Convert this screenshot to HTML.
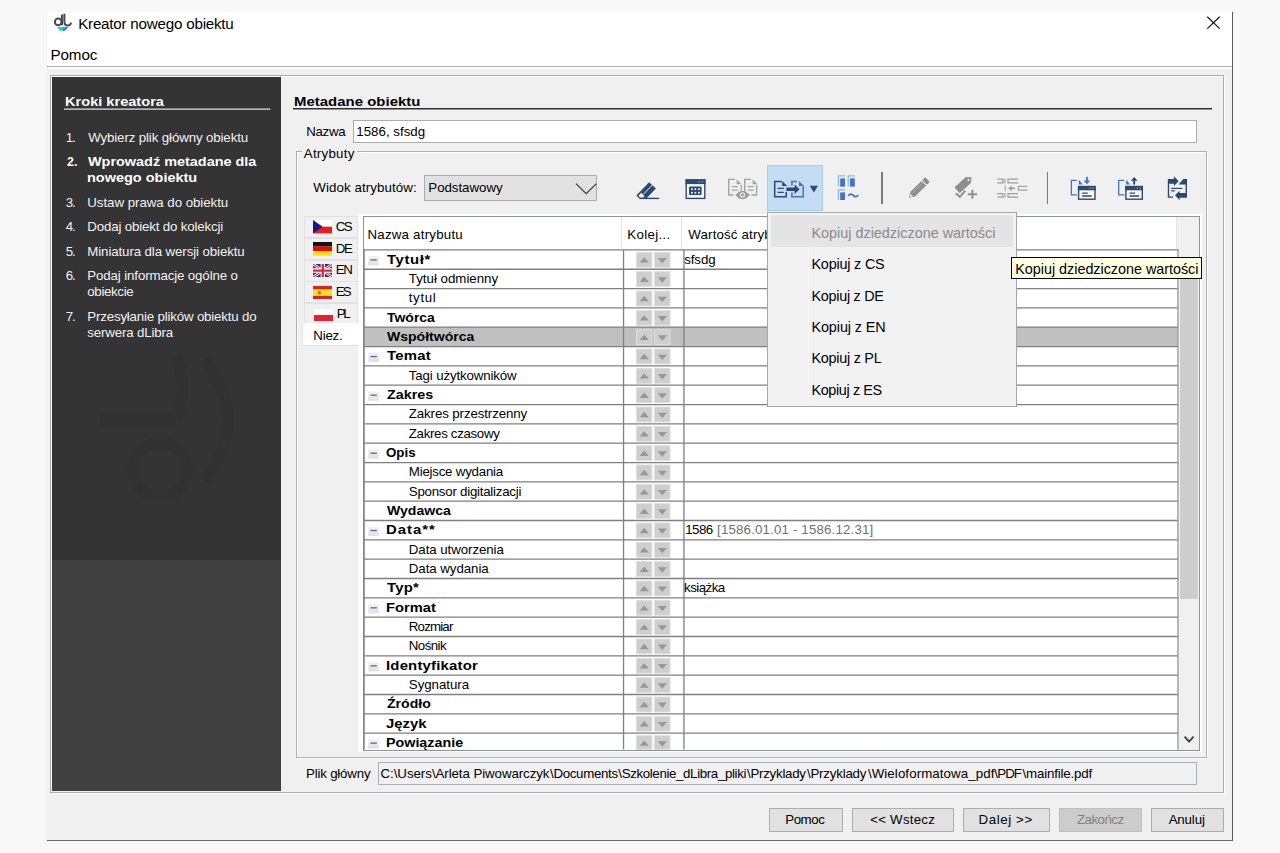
<!DOCTYPE html><html lang="pl"><head><meta charset="utf-8"><title>Kreator nowego obiektu</title><style>
html,body{margin:0;padding:0}
body{width:1280px;height:853px;background:#f8f8f8;overflow:hidden;position:relative;font-family:'Liberation Sans',sans-serif;font-size:13.3px}
div,span,svg{position:absolute;box-sizing:border-box}
.t{white-space:pre;line-height:20px;height:20px}
.btn{background:#e1e1e1;border:1px solid #adadad}
.hl{background:#848484}
.vl{background:#848484}
.ud{background:#cfcfcf;border:1px solid #dcdcdc;width:15.6px;height:15px}
.ex{background:linear-gradient(#f1f1f1,#e2e2e2);width:10.6px;height:9.4px}
.ex i{position:absolute;left:2.3px;top:3.2px;width:6.2px;height:1.3px;background:#5465b2}
.tab{left:305.3px;width:52.6px;height:21.8px;border:1px solid #e2e2e2;background:#f0f0f0}
</style></head><body>
<div style="left:47.00px;top:12.00px;width:1186.00px;height:829.00px;background:#f0f0f0"></div>
<div style="left:47.00px;top:12.00px;width:1185.00px;height:54.00px;background:#fff"></div>
<div style="left:47.00px;top:66.00px;width:1185.00px;height:1.00px;background:#b0b0b0"></div>
<div style="left:47.00px;top:67.00px;width:1185.00px;height:2.00px;background:#fcfcfc"></div>
<div style="left:1232.00px;top:12.00px;width:1.00px;height:829.00px;background:#5a5a5a"></div>
<div style="left:47.00px;top:840.00px;width:1186.00px;height:1.00px;background:#6a6a6a"></div>
<svg style="left:52px;top:12px" width="22" height="22" viewBox="52 12 22 22"><circle cx="58.2" cy="21.9" r="3.3" fill="none" stroke="#474c54" stroke-width="2"/><path d="M62 14.6V25.2" stroke="#474c54" stroke-width="2" fill="none"/><path d="M64.4 14.6V21.6Q64.4 25.6 67.6 25.6Q70 25.6 70.9 23.4" stroke="#474c54" stroke-width="2" fill="none" stroke-linecap="round"/><path d="M57.3 27.1H62.8V31Q59.4 31.4 57.3 27.1z" fill="#1fd6a6"/><path d="M62.8 27.1H68Q66.2 31.4 62.8 31z" fill="#2f8df0"/></svg>
<svg style="left:1205px;top:15px" width="17" height="16" viewBox="0 0 17 16"><path d="M2.3 1.7L14.7 13.6M14.7 1.7L2.3 13.6" stroke="#1a1a1a" stroke-width="1.25" fill="none"/></svg>
<div style="left:49.60px;top:75.00px;width:1174.40px;height:717.60px;border:1px solid #adadad;box-shadow:inset 1px 1px 0 #fff, 1px 1px 0 #fff"></div>
<div style="left:52.00px;top:77.00px;width:229.00px;height:483.00px;background:#343434"></div>
<div style="left:52.00px;top:560.00px;width:229.00px;height:231.20px;background:#414141"></div>
<svg style="left:90px;top:350px" width="160" height="170" viewBox="90 350 160 170"><g fill="none" stroke="#323232" stroke-width="11"><path d="M100 420H175"/><circle cx="160" cy="470" r="27"/><path d="M175 355Q190 390 175 420"/><path d="M205 360Q250 420 205 480"/></g></svg>
<svg style="left:60px;top:104px" width="215" height="10" viewBox="60 104 215 10"><path d="M64 109H270.3" stroke="#e2e2e2" stroke-width="1.25"/></svg>
<svg style="left:290px;top:104px" width="925" height="10" viewBox="290 104 925 10"><path d="M293 108.7H1212" stroke="#2e2e2e" stroke-width="1.6"/></svg>
<div style="left:353.00px;top:119.80px;width:843.60px;height:23.00px;background:#fff;border:1px solid #abadb3"></div>
<div style="left:296.00px;top:151.00px;width:911.40px;height:606.60px;border:1px solid #b0b0b0;box-shadow:inset 1px 1px 0 #fff, 1px 1px 0 #fff"></div>
<div style="left:301.50px;top:149.00px;width:55.50px;height:6.00px;background:#f0f0f0"></div>
<div style="left:423.80px;top:175.00px;width:173.00px;height:26.00px;background:#e1e1e1;border:1px solid #adadad"></div>
<svg style="left:574px;top:181px" width="24" height="16" viewBox="0 0 24 16"><path d="M2 2.6L12.2 12.6L22.4 2.6" stroke="#3c3c3c" stroke-width="1.3" fill="none"/></svg>
<div style="left:766.90px;top:165.30px;width:56.50px;height:45.60px;background:#c4ddf3;border:1px solid #a5cdf3"></div>
<svg style="left:634px;top:178px" width="28" height="24" viewBox="634 178 28 24"><path d="M636.3 195.6L649.1 182.2L655.9 188.4L646.6 198.2H639z" fill="#2c4a6e"/><path d="M639.4 198.4H659.2" stroke="#2c4a6e" stroke-width="1.4"/><path d="M643.4 194.2L652.2 185.2" stroke="#f0f0f0" stroke-width="1"/><path d="M638.4 195.7L641.4 192.8L644.6 196.2L643.2 197.4H640z" fill="#f0f0f0"/></svg>
<svg style="left:684px;top:177px" width="24" height="25" viewBox="684 177 24 25"><rect x="686.2" y="180" width="18.6" height="18.4" fill="#fafafa" stroke="#2c4a6e" stroke-width="1.4"/><rect x="685.5" y="179.3" width="20" height="4.8" fill="#2c4a6e"/><rect x="698.4" y="181" width="1.5" height="1.5" fill="#7d93ad"/><rect x="701.6" y="181" width="1.5" height="1.5" fill="#7d93ad"/><rect x="689" y="186.6" width="12.6" height="8.5" rx="1" fill="#2c4a6e"/><rect x="691.1" y="188.3" width="1.7" height="1.7" fill="#f6f6f6"/><rect x="691.1" y="191.9" width="1.7" height="1.7" fill="#f6f6f6"/><rect x="694.5" y="188.3" width="1.7" height="1.7" fill="#f6f6f6"/><rect x="694.5" y="191.9" width="1.7" height="1.7" fill="#f6f6f6"/><rect x="698" y="188.3" width="1.7" height="1.7" fill="#f6f6f6"/><rect x="698" y="191.9" width="1.7" height="1.7" fill="#f6f6f6"/></svg>
<svg style="left:726px;top:176px" width="34" height="26" viewBox="726 176 34 26"><path d="M735 179.4H728.7V195H733.6" fill="none" stroke="#a3a3a3" stroke-width="1.4"/><path d="M736.6 179.2V184.2H741.4z" fill="#a3a3a3"/><path d="M731.6 186.6H737.8M731.6 190.2H737.8" stroke="#a3a3a3" stroke-width="1.3"/><path d="M751 179.4H744.7V195H749.6" fill="none" stroke="#a3a3a3" stroke-width="1.4"/><path d="M752.6 179.2V184.2H757.4z" fill="#a3a3a3"/><path d="M747.6 186.6H753.8M747.6 190.2H753.8" stroke="#a3a3a3" stroke-width="1.3"/><path d="M741.2 185V190.5" stroke="#a3a3a3" stroke-width="1.3"/><path d="M756.6 185V195H751.4" fill="none" stroke="#a3a3a3" stroke-width="1.4"/><path d="M735.6 195Q742.4 186.4 749.4 195Q742.4 203.6 735.6 195z" fill="#9a9a9a"/><circle cx="742.5" cy="195" r="2.7" fill="#e8e8e8"/><circle cx="742.5" cy="195" r="1.4" fill="#9a9a9a"/></svg>
<svg style="left:772px;top:178px" width="48" height="22" viewBox="772 178 48 22"><path d="M781.8 181.6H774.7V196.8H786.2V192" fill="none" stroke="#2c4a6e" stroke-width="1.5"/><path d="M782.2 180.9V186H787.2z" fill="#2c4a6e"/><path d="M777.5 188.4H783.8M777.5 192.3H783.8" stroke="#2c4a6e" stroke-width="1.3"/><path d="M797 181.6H791.9V185.4M791.9 192.6V196.8H803.2V186.2" fill="none" stroke="#3f74c6" stroke-width="1.5"/><path d="M799 180.9V186H804z" fill="#3f74c6"/><path d="M786.4 187.6H794.6V184.6L799.6 189.3L794.6 194V191H786.4z" fill="#2c4a6e"/><path d="M809.7 185.7H818L813.85 192.4z" fill="#2c4a6e"/></svg>
<svg style="left:836px;top:173px" width="25" height="29" viewBox="836 173 25 29"><path d="M838.4 186.6V175.79999999999998H845.0" fill="none" stroke="#8db4ea" stroke-width="1.2"/><rect x="840.1999999999999" y="178.39999999999998" width="4.8" height="8.2" fill="#3f74c6"/><path d="M848.2 186.6V175.79999999999998H854.8000000000001" fill="none" stroke="#8db4ea" stroke-width="1.2"/><rect x="850.0" y="178.39999999999998" width="4.8" height="8.2" fill="#3f74c6"/><path d="M838.4 200.0V189.79999999999998H845.0" fill="none" stroke="#8db4ea" stroke-width="1.2"/><rect x="840.1999999999999" y="192.39999999999998" width="4.8" height="7.6000000000000005" fill="#3f74c6"/><path d="M848.2 195.8Q850.6 192.6 853.2 195.4Q855.8 198.2 858.2 195" fill="none" stroke="#3f74c6" stroke-width="1.7"/></svg>
<svg style="left:905px;top:175px" width="27" height="27" viewBox="905 175 27 27"><g transform="rotate(-44.5 918.5 188.5)"><path d="M905.2 188.5L910.4 185.2H926V191.8H910.4z" fill="#8e8e8e"/><rect x="927" y="185.2" width="4.2" height="6.6" rx=".8" fill="#8e8e8e"/><path d="M911 187.4H925.4" stroke="#b5b5b5" stroke-width=".8"/><path d="M906.2 188.5L909.2 186.6V190.4z" fill="#e8e8e8"/></g></svg>
<svg style="left:953px;top:175px" width="27" height="27" viewBox="953 175 27 27"><g transform="rotate(-42 964 184)"><path d="M955.2 180.6H969.4L973.4 184L969.4 187.4H955.2z" fill="#8e8e8e" stroke="#8e8e8e" stroke-width="1" stroke-linejoin="round"/><circle cx="970" cy="184" r="1.1" fill="#f0f0f0"/></g><path d="M955.8 193.2L959.8 196.8L965.4 190.6" fill="none" stroke="#8e8e8e" stroke-width="1.9"/><path d="M972.4 189.8V198.8M967.8 194.3H977" stroke="#8e8e8e" stroke-width="2"/></svg>
<svg style="left:995px;top:176px" width="35" height="24" viewBox="995 176 35 24"><path d="M997.4 179.2H1002.8V182.79999999999998H997.4" fill="none" stroke="#9c9c9c" stroke-width="1.2"/><path d="M1004.8 178.6V183.39999999999998" stroke="#9c9c9c" stroke-width="1.1"/><path d="M1018 179.2H1008V182.79999999999998H1018" fill="none" stroke="#9c9c9c" stroke-width="1.2"/><path d="M997.4 193.6H1002.8V197.2H997.4" fill="none" stroke="#9c9c9c" stroke-width="1.2"/><path d="M1004.8 193.0V197.79999999999998" stroke="#9c9c9c" stroke-width="1.1"/><path d="M1018 193.6H1008V197.2H1018" fill="none" stroke="#9c9c9c" stroke-width="1.2"/><path d="M1005.3 185.4V191.2" stroke="#a3a3a3" stroke-width="1.1"/><path d="M1008.2 188.3L1011.6 185.4V187.4H1015V189.2H1011.6V191.2z" fill="#9a9a9a"/><path d="M1027.4 186.4H1018.4V190.2H1027.4" fill="none" stroke="#a3a3a3" stroke-width="1.2"/></svg>
<svg style="left:1068px;top:174px" width="30" height="28" viewBox="1068 174 30 28"><rect x="1078.6000000000001" y="186.6" width="16.4" height="12.6" fill="#fafafa" stroke="#2c4a6e" stroke-width="1.4"/><rect x="1077.9" y="185.9" width="17.8" height="4.4" fill="#2c4a6e"/><rect x="1089.4" y="187.4" width="1.4" height="1.4" fill="#7d93ad"/><rect x="1092.2" y="187.4" width="1.4" height="1.4" fill="#7d93ad"/><path d="M1082.2 193.2H1087.8000000000002M1082.2 196H1091.8000000000002" stroke="#2c4a6e" stroke-width="1.3"/><path d="M1076.8000000000002 180.4H1071.4V194.8H1077.0" fill="none" stroke="#3f74c6" stroke-width="1.3"/><path d="M1078.8000000000002 179.8V184.4H1082.8000000000002z" fill="#3f74c6"/><path d="M1086.9 176.8V181" stroke="#3f74c6" stroke-width="1.9"/><path d="M1083.5 180.4H1090.3L1086.9 184.2z" fill="#3f74c6"/></svg>
<svg style="left:1115px;top:174px" width="31" height="28" viewBox="1115 174 31 28"><rect x="1125.9" y="186.6" width="16.4" height="12.6" fill="#fafafa" stroke="#2c4a6e" stroke-width="1.4"/><rect x="1125.2" y="185.9" width="17.8" height="4.4" fill="#2c4a6e"/><rect x="1136.7" y="187.4" width="1.4" height="1.4" fill="#7d93ad"/><rect x="1139.5" y="187.4" width="1.4" height="1.4" fill="#7d93ad"/><path d="M1129.5 193.2H1135.1000000000001M1129.5 196H1139.1000000000001" stroke="#2c4a6e" stroke-width="1.3"/><path d="M1124.1000000000001 180.4H1118.7V194.8H1124.3" fill="none" stroke="#3f74c6" stroke-width="1.3"/><path d="M1126.1000000000001 179.8V184.4H1130.1000000000001z" fill="#3f74c6"/><path d="M1134.2 180V184.6" stroke="#2c4a6e" stroke-width="1.9"/><path d="M1130.8 180.8H1137.6L1134.2 177z" fill="#2c4a6e"/></svg>
<svg style="left:1165px;top:174px" width="25" height="28" viewBox="1165 174 25 28"><path d="M1167.8 178.9H1173.9V176.3L1178.7 181.2L1173.9 185.9V183.8H1169.2V196.4H1173.1V197.7H1167.8z" fill="#2c4a6e"/><path d="M1183.4 178.9H1187V197.7H1179.6V200.3L1175 195.3L1179.6 190.8V193H1185.6V184.4H1178.6z" fill="#2c4a6e"/><path d="M1171.2 188.4H1182.4" stroke="#2c4a6e" stroke-width="1.2"/><path d="M1171.2 190.8H1174.8" stroke="#2c4a6e" stroke-width="1.3"/></svg>
<div style="left:881.30px;top:172.40px;width:1.40px;height:31.20px;background:#7b7b7b"></div>
<div style="left:1046.80px;top:172.40px;width:1.40px;height:31.20px;background:#7b7b7b"></div>
<div style="left:304.40px;top:216.40px;width:53.50px;height:22.00px;border:1px solid #e1e1e1;background:#f0f0f0"></div>
<svg style="left:312.6px;top:220.4px" width="19.6" height="13.4" viewBox="0 0 19.6 13.4" preserveAspectRatio="none"><rect width="19.6" height="6.7" fill="#fff"/><rect y="6.7" width="19.6" height="6.7" fill="#ee1a1a"/><path d="M0 0L9.6 6.7L0 13.4z" fill="#16168e"/></svg>
<div style="left:304.40px;top:238.00px;width:53.50px;height:22.00px;border:1px solid #e1e1e1;background:#f0f0f0"></div>
<svg style="left:312.6px;top:242.3px" width="19.6" height="13.6" viewBox="0 0 19.6 13.6" preserveAspectRatio="none"><rect width="19.6" height="4.6" fill="#141414"/><rect y="4.6" width="19.6" height="4.5" fill="#f60404"/><rect y="9.1" width="19.6" height="4.5" fill="#ffe00a"/></svg>
<div style="left:304.40px;top:259.60px;width:53.50px;height:22.00px;border:1px solid #e1e1e1;background:#f0f0f0"></div>
<svg style="left:312.6px;top:263.90000000000003px" width="19.6" height="13.2" viewBox="0 0 20 13" preserveAspectRatio="none"><rect width="20" height="13" fill="#26337f"/><path d="M0 0L20 13M20 0L0 13" stroke="#fff" stroke-width="2.6"/><path d="M0 0L20 13M20 0L0 13" stroke="#d8283a" stroke-width="1"/><path d="M10 0V13M0 6.5H20" stroke="#fff" stroke-width="4.4"/><path d="M10 0V13M0 6.5H20" stroke="#d8283a" stroke-width="2.4"/></svg>
<div style="left:304.40px;top:281.20px;width:53.50px;height:22.00px;border:1px solid #e1e1e1;background:#f0f0f0"></div>
<svg style="left:312.6px;top:285.50000000000006px" width="19.6" height="13.2" viewBox="0 0 20 13" preserveAspectRatio="none"><rect width="20" height="13" fill="#d8222a"/><rect y="3.2" width="20" height="6.6" fill="#ffdf1e"/><circle cx="6.6" cy="6.6" r="1.7" fill="#b5753a"/></svg>
<div style="left:304.40px;top:302.80px;width:53.50px;height:22.00px;border:1px solid #e1e1e1;background:#f0f0f0"></div>
<svg style="left:313.6px;top:308.8px" width="19.6" height="12" viewBox="0 0 20 12" preserveAspectRatio="none"><rect width="20" height="6" fill="#fff"/><rect y="6" width="20" height="6" fill="#e8212b"/></svg>
<div style="left:358.00px;top:213.60px;width:843.80px;height:538.20px;background:#fdfdfd"></div>
<div style="left:302.50px;top:322.80px;width:56.70px;height:22.40px;background:#fff;box-shadow:-1px 0 0 #e6e6e6,0 1px 0 #e0e0e0"></div>
<div style="left:362.80px;top:216.00px;width:837.40px;height:534.50px;background:#fff;border:1px solid #8a93a0"></div>
<div style="left:1177.30px;top:217.00px;width:21.90px;height:532.50px;background:#f0f0f0"></div>
<div style="left:620.80px;top:217.00px;width:1.40px;height:32.00px;background:#e4e4e4"></div>
<div style="left:680.80px;top:217.00px;width:1.40px;height:32.00px;background:#e4e4e4"></div>
<div style="left:1176.00px;top:217.00px;width:1.30px;height:32.00px;background:#e4e4e4"></div>
<div style="left:364.00px;top:327.22px;width:813.80px;height:19.33px;background:#c0c0c0"></div>
<svg style="left:0;top:0" width="1280" height="853" viewBox="0 0 1280 853"><path d="M363.8 249.90H1178.4M363.8 269.23H1178.4M363.8 288.56H1178.4M363.8 307.89H1178.4M363.8 327.22H1178.4M363.8 346.55H1178.4M363.8 365.88H1178.4M363.8 385.21H1178.4M363.8 404.54H1178.4M363.8 423.87H1178.4M363.8 443.20H1178.4M363.8 462.53H1178.4M363.8 481.86H1178.4M363.8 501.19H1178.4M363.8 520.52H1178.4M363.8 539.85H1178.4M363.8 559.18H1178.4M363.8 578.51H1178.4M363.8 597.84H1178.4M363.8 617.17H1178.4M363.8 636.50H1178.4M363.8 655.83H1178.4M363.8 675.16H1178.4M363.8 694.49H1178.4M363.8 713.82H1178.4M363.8 733.15H1178.4M364.1 249.3V749.5M623.55 249.3V749.5M683.95 249.3V749.5" stroke="#808080" stroke-width="1.3" fill="none"/><path d="M1177.95 249.3V749.5" stroke="#9a9a9a" stroke-width="1.3" fill="none"/></svg>
<svg style="left:0;top:0" width="1280" height="853" viewBox="0 0 1280 853"><defs><linearGradient id="eg" x1="0" y1="0" x2="0" y2="1"><stop offset="0" stop-color="#f2f2f2"/><stop offset="1" stop-color="#e0e0e0"/></linearGradient></defs><rect x="636.5" y="252.40" width="15.4" height="14.90" fill="#cecece" stroke="#dedede" stroke-width="1"/><path d="M639.7 262.60L644.2 257.20L648.7 262.60z" fill="#979797"/><rect x="654.6" y="252.40" width="15.4" height="14.90" fill="#cecece" stroke="#dedede" stroke-width="1"/><path d="M657.8000000000001 258.00L662.3000000000001 263.40L666.8000000000001 258.00z" fill="#979797"/><rect x="368.2" y="256.20" width="10.6" height="9.20" fill="url(#eg)"/><path d="M370.5 259.90H376.8" stroke="#5465b2" stroke-width="1.3"/><rect x="636.5" y="271.73" width="15.4" height="14.90" fill="#cecece" stroke="#dedede" stroke-width="1"/><path d="M639.7 281.93L644.2 276.53L648.7 281.93z" fill="#979797"/><rect x="654.6" y="271.73" width="15.4" height="14.90" fill="#cecece" stroke="#dedede" stroke-width="1"/><path d="M657.8000000000001 277.33L662.3000000000001 282.73L666.8000000000001 277.33z" fill="#979797"/><rect x="636.5" y="291.06" width="15.4" height="14.90" fill="#cecece" stroke="#dedede" stroke-width="1"/><path d="M639.7 301.26L644.2 295.86L648.7 301.26z" fill="#979797"/><rect x="654.6" y="291.06" width="15.4" height="14.90" fill="#cecece" stroke="#dedede" stroke-width="1"/><path d="M657.8000000000001 296.66L662.3000000000001 302.06L666.8000000000001 296.66z" fill="#979797"/><rect x="636.5" y="310.39" width="15.4" height="14.90" fill="#cecece" stroke="#dedede" stroke-width="1"/><path d="M639.7 320.59L644.2 315.19L648.7 320.59z" fill="#979797"/><rect x="654.6" y="310.39" width="15.4" height="14.90" fill="#cecece" stroke="#dedede" stroke-width="1"/><path d="M657.8000000000001 315.99L662.3000000000001 321.39L666.8000000000001 315.99z" fill="#979797"/><rect x="636.5" y="329.72" width="15.4" height="14.90" fill="#cecece" stroke="#dedede" stroke-width="1"/><path d="M639.7 339.92L644.2 334.52L648.7 339.92z" fill="#979797"/><rect x="654.6" y="329.72" width="15.4" height="14.90" fill="#cecece" stroke="#dedede" stroke-width="1"/><path d="M657.8000000000001 335.32L662.3000000000001 340.72L666.8000000000001 335.32z" fill="#979797"/><rect x="636.5" y="349.05" width="15.4" height="14.90" fill="#cecece" stroke="#dedede" stroke-width="1"/><path d="M639.7 359.25L644.2 353.85L648.7 359.25z" fill="#979797"/><rect x="654.6" y="349.05" width="15.4" height="14.90" fill="#cecece" stroke="#dedede" stroke-width="1"/><path d="M657.8000000000001 354.65L662.3000000000001 360.05L666.8000000000001 354.65z" fill="#979797"/><rect x="368.2" y="352.85" width="10.6" height="9.20" fill="url(#eg)"/><path d="M370.5 356.55H376.8" stroke="#5465b2" stroke-width="1.3"/><rect x="636.5" y="368.38" width="15.4" height="14.90" fill="#cecece" stroke="#dedede" stroke-width="1"/><path d="M639.7 378.58L644.2 373.18L648.7 378.58z" fill="#979797"/><rect x="654.6" y="368.38" width="15.4" height="14.90" fill="#cecece" stroke="#dedede" stroke-width="1"/><path d="M657.8000000000001 373.98L662.3000000000001 379.38L666.8000000000001 373.98z" fill="#979797"/><rect x="636.5" y="387.71" width="15.4" height="14.90" fill="#cecece" stroke="#dedede" stroke-width="1"/><path d="M639.7 397.91L644.2 392.51L648.7 397.91z" fill="#979797"/><rect x="654.6" y="387.71" width="15.4" height="14.90" fill="#cecece" stroke="#dedede" stroke-width="1"/><path d="M657.8000000000001 393.31L662.3000000000001 398.71L666.8000000000001 393.31z" fill="#979797"/><rect x="368.2" y="391.51" width="10.6" height="9.20" fill="url(#eg)"/><path d="M370.5 395.21H376.8" stroke="#5465b2" stroke-width="1.3"/><rect x="636.5" y="407.04" width="15.4" height="14.90" fill="#cecece" stroke="#dedede" stroke-width="1"/><path d="M639.7 417.24L644.2 411.84L648.7 417.24z" fill="#979797"/><rect x="654.6" y="407.04" width="15.4" height="14.90" fill="#cecece" stroke="#dedede" stroke-width="1"/><path d="M657.8000000000001 412.64L662.3000000000001 418.04L666.8000000000001 412.64z" fill="#979797"/><rect x="636.5" y="426.37" width="15.4" height="14.90" fill="#cecece" stroke="#dedede" stroke-width="1"/><path d="M639.7 436.57L644.2 431.17L648.7 436.57z" fill="#979797"/><rect x="654.6" y="426.37" width="15.4" height="14.90" fill="#cecece" stroke="#dedede" stroke-width="1"/><path d="M657.8000000000001 431.97L662.3000000000001 437.37L666.8000000000001 431.97z" fill="#979797"/><rect x="636.5" y="445.70" width="15.4" height="14.90" fill="#cecece" stroke="#dedede" stroke-width="1"/><path d="M639.7 455.90L644.2 450.50L648.7 455.90z" fill="#979797"/><rect x="654.6" y="445.70" width="15.4" height="14.90" fill="#cecece" stroke="#dedede" stroke-width="1"/><path d="M657.8000000000001 451.30L662.3000000000001 456.70L666.8000000000001 451.30z" fill="#979797"/><rect x="368.2" y="449.50" width="10.6" height="9.20" fill="url(#eg)"/><path d="M370.5 453.20H376.8" stroke="#5465b2" stroke-width="1.3"/><rect x="636.5" y="465.03" width="15.4" height="14.90" fill="#cecece" stroke="#dedede" stroke-width="1"/><path d="M639.7 475.23L644.2 469.83L648.7 475.23z" fill="#979797"/><rect x="654.6" y="465.03" width="15.4" height="14.90" fill="#cecece" stroke="#dedede" stroke-width="1"/><path d="M657.8000000000001 470.63L662.3000000000001 476.03L666.8000000000001 470.63z" fill="#979797"/><rect x="636.5" y="484.36" width="15.4" height="14.90" fill="#cecece" stroke="#dedede" stroke-width="1"/><path d="M639.7 494.56L644.2 489.16L648.7 494.56z" fill="#979797"/><rect x="654.6" y="484.36" width="15.4" height="14.90" fill="#cecece" stroke="#dedede" stroke-width="1"/><path d="M657.8000000000001 489.96L662.3000000000001 495.36L666.8000000000001 489.96z" fill="#979797"/><rect x="636.5" y="503.69" width="15.4" height="14.90" fill="#cecece" stroke="#dedede" stroke-width="1"/><path d="M639.7 513.89L644.2 508.49L648.7 513.89z" fill="#979797"/><rect x="654.6" y="503.69" width="15.4" height="14.90" fill="#cecece" stroke="#dedede" stroke-width="1"/><path d="M657.8000000000001 509.29L662.3000000000001 514.69L666.8000000000001 509.29z" fill="#979797"/><rect x="636.5" y="523.02" width="15.4" height="14.90" fill="#cecece" stroke="#dedede" stroke-width="1"/><path d="M639.7 533.22L644.2 527.82L648.7 533.22z" fill="#979797"/><rect x="654.6" y="523.02" width="15.4" height="14.90" fill="#cecece" stroke="#dedede" stroke-width="1"/><path d="M657.8000000000001 528.62L662.3000000000001 534.02L666.8000000000001 528.62z" fill="#979797"/><rect x="368.2" y="526.82" width="10.6" height="9.20" fill="url(#eg)"/><path d="M370.5 530.52H376.8" stroke="#5465b2" stroke-width="1.3"/><rect x="636.5" y="542.35" width="15.4" height="14.90" fill="#cecece" stroke="#dedede" stroke-width="1"/><path d="M639.7 552.55L644.2 547.15L648.7 552.55z" fill="#979797"/><rect x="654.6" y="542.35" width="15.4" height="14.90" fill="#cecece" stroke="#dedede" stroke-width="1"/><path d="M657.8000000000001 547.95L662.3000000000001 553.35L666.8000000000001 547.95z" fill="#979797"/><rect x="636.5" y="561.68" width="15.4" height="14.90" fill="#cecece" stroke="#dedede" stroke-width="1"/><path d="M639.7 571.88L644.2 566.48L648.7 571.88z" fill="#979797"/><rect x="654.6" y="561.68" width="15.4" height="14.90" fill="#cecece" stroke="#dedede" stroke-width="1"/><path d="M657.8000000000001 567.28L662.3000000000001 572.68L666.8000000000001 567.28z" fill="#979797"/><rect x="636.5" y="581.01" width="15.4" height="14.90" fill="#cecece" stroke="#dedede" stroke-width="1"/><path d="M639.7 591.21L644.2 585.81L648.7 591.21z" fill="#979797"/><rect x="654.6" y="581.01" width="15.4" height="14.90" fill="#cecece" stroke="#dedede" stroke-width="1"/><path d="M657.8000000000001 586.61L662.3000000000001 592.01L666.8000000000001 586.61z" fill="#979797"/><rect x="636.5" y="600.34" width="15.4" height="14.90" fill="#cecece" stroke="#dedede" stroke-width="1"/><path d="M639.7 610.54L644.2 605.14L648.7 610.54z" fill="#979797"/><rect x="654.6" y="600.34" width="15.4" height="14.90" fill="#cecece" stroke="#dedede" stroke-width="1"/><path d="M657.8000000000001 605.94L662.3000000000001 611.34L666.8000000000001 605.94z" fill="#979797"/><rect x="368.2" y="604.14" width="10.6" height="9.20" fill="url(#eg)"/><path d="M370.5 607.84H376.8" stroke="#5465b2" stroke-width="1.3"/><rect x="636.5" y="619.67" width="15.4" height="14.90" fill="#cecece" stroke="#dedede" stroke-width="1"/><path d="M639.7 629.87L644.2 624.47L648.7 629.87z" fill="#979797"/><rect x="654.6" y="619.67" width="15.4" height="14.90" fill="#cecece" stroke="#dedede" stroke-width="1"/><path d="M657.8000000000001 625.27L662.3000000000001 630.67L666.8000000000001 625.27z" fill="#979797"/><rect x="636.5" y="639.00" width="15.4" height="14.90" fill="#cecece" stroke="#dedede" stroke-width="1"/><path d="M639.7 649.20L644.2 643.80L648.7 649.20z" fill="#979797"/><rect x="654.6" y="639.00" width="15.4" height="14.90" fill="#cecece" stroke="#dedede" stroke-width="1"/><path d="M657.8000000000001 644.60L662.3000000000001 650.00L666.8000000000001 644.60z" fill="#979797"/><rect x="636.5" y="658.33" width="15.4" height="14.90" fill="#cecece" stroke="#dedede" stroke-width="1"/><path d="M639.7 668.53L644.2 663.13L648.7 668.53z" fill="#979797"/><rect x="654.6" y="658.33" width="15.4" height="14.90" fill="#cecece" stroke="#dedede" stroke-width="1"/><path d="M657.8000000000001 663.93L662.3000000000001 669.33L666.8000000000001 663.93z" fill="#979797"/><rect x="368.2" y="662.13" width="10.6" height="9.20" fill="url(#eg)"/><path d="M370.5 665.83H376.8" stroke="#5465b2" stroke-width="1.3"/><rect x="636.5" y="677.66" width="15.4" height="14.90" fill="#cecece" stroke="#dedede" stroke-width="1"/><path d="M639.7 687.86L644.2 682.46L648.7 687.86z" fill="#979797"/><rect x="654.6" y="677.66" width="15.4" height="14.90" fill="#cecece" stroke="#dedede" stroke-width="1"/><path d="M657.8000000000001 683.26L662.3000000000001 688.66L666.8000000000001 683.26z" fill="#979797"/><rect x="636.5" y="696.99" width="15.4" height="14.90" fill="#cecece" stroke="#dedede" stroke-width="1"/><path d="M639.7 707.19L644.2 701.79L648.7 707.19z" fill="#979797"/><rect x="654.6" y="696.99" width="15.4" height="14.90" fill="#cecece" stroke="#dedede" stroke-width="1"/><path d="M657.8000000000001 702.59L662.3000000000001 707.99L666.8000000000001 702.59z" fill="#979797"/><rect x="636.5" y="716.32" width="15.4" height="14.90" fill="#cecece" stroke="#dedede" stroke-width="1"/><path d="M639.7 726.52L644.2 721.12L648.7 726.52z" fill="#979797"/><rect x="654.6" y="716.32" width="15.4" height="14.90" fill="#cecece" stroke="#dedede" stroke-width="1"/><path d="M657.8000000000001 721.92L662.3000000000001 727.32L666.8000000000001 721.92z" fill="#979797"/><rect x="636.5" y="735.65" width="15.4" height="13.75" fill="#cecece" stroke="#dedede" stroke-width="1"/><path d="M639.7 745.85L644.2 740.45L648.7 745.85z" fill="#979797"/><rect x="654.6" y="735.65" width="15.4" height="13.75" fill="#cecece" stroke="#dedede" stroke-width="1"/><path d="M657.8000000000001 741.25L662.3000000000001 746.65L666.8000000000001 741.25z" fill="#979797"/><rect x="368.2" y="739.45" width="10.6" height="9.20" fill="url(#eg)"/><path d="M370.5 743.15H376.8" stroke="#5465b2" stroke-width="1.3"/></svg>
<div style="left:1180.20px;top:268.00px;width:17.60px;height:331.30px;background:#cdcdcd"></div>
<svg style="left:1182.5px;top:735px" width="12" height="9" viewBox="0 0 12 9"><path d="M1.6 1.6L6.1 6.6L10.6 1.6" stroke="#404040" stroke-width="1.9" fill="none"/></svg>
<div style="left:378.00px;top:761.80px;width:818.60px;height:23.20px;background:#f0f0f0;border:1px solid #a9aeb8"></div>
<div style="left:769.40px;top:807.50px;width:73.20px;height:24.80px;background:#e1e1e1;border:1px solid #adadad"></div>
<div style="left:851.50px;top:807.50px;width:102.30px;height:24.80px;background:#e1e1e1;border:1px solid #adadad"></div>
<div style="left:962.50px;top:807.50px;width:87.70px;height:24.80px;background:#e1e1e1;border:1px solid #adadad"></div>
<div style="left:1059.00px;top:807.50px;width:83.20px;height:24.80px;background:#cccccc;border:1px solid #bfbfbf"></div>
<div style="left:1151.00px;top:807.50px;width:73.40px;height:24.80px;background:#e1e1e1;border:1px solid #adadad"></div>
<span class="t" style="left:78.18px;top:14.13px;font-size:15.2px;letter-spacing:-0.228px;">Kreator nowego obiektu</span>
<span class="t" style="left:50.40px;top:45.33px;font-size:15.2px;letter-spacing:-0.050px;">Pomoc</span>
<span class="t" style="left:65.02px;top:91.59px;font-size:13.3px;font-weight:700;color:#fff;transform:scaleX(1.0972);transform-origin:0 0;">Kroki kreatora</span>
<span class="t" style="left:65.80px;top:127.79px;font-size:13.3px;color:#f2f2f2;letter-spacing:-1.194px;">1.</span>
<span class="t" style="left:88.20px;top:127.79px;font-size:13.3px;color:#f2f2f2;letter-spacing:-0.126px;">Wybierz plik główny obiektu</span>
<span class="t" style="left:66.70px;top:152.19px;font-size:13.3px;font-weight:700;color:#fff;transform:scaleX(0.9351);transform-origin:0 0;">2.</span>
<span class="t" style="left:88.20px;top:152.19px;font-size:13.3px;font-weight:700;color:#fff;transform:scaleX(1.0852);transform-origin:0 0;">Wprowadź metadane dla</span>
<span class="t" style="left:87.30px;top:168.49px;font-size:13.3px;font-weight:700;color:#fff;transform:scaleX(1.0887);transform-origin:0 0;">nowego obiektu</span>
<span class="t" style="left:65.80px;top:192.89px;font-size:13.3px;color:#f2f2f2;letter-spacing:-1.194px;">3.</span>
<span class="t" style="left:87.30px;top:192.89px;font-size:13.3px;color:#f2f2f2;letter-spacing:-0.046px;">Ustaw prawa do obiektu</span>
<span class="t" style="left:65.80px;top:217.29px;font-size:13.3px;color:#f2f2f2;letter-spacing:-1.194px;">4.</span>
<span class="t" style="left:87.30px;top:217.29px;font-size:13.3px;color:#f2f2f2;letter-spacing:-0.165px;">Dodaj obiekt do kolekcji</span>
<span class="t" style="left:65.80px;top:241.69px;font-size:13.3px;color:#f2f2f2;letter-spacing:-1.194px;">5.</span>
<span class="t" style="left:87.30px;top:241.69px;font-size:13.3px;color:#f2f2f2;letter-spacing:-0.110px;">Miniatura dla wersji obiektu</span>
<span class="t" style="left:65.80px;top:265.99px;font-size:13.3px;color:#f2f2f2;letter-spacing:-1.194px;">6.</span>
<span class="t" style="left:87.30px;top:265.99px;font-size:13.3px;color:#f2f2f2;letter-spacing:-0.129px;">Podaj informacje ogólne o</span>
<span class="t" style="left:87.30px;top:282.29px;font-size:13.3px;color:#f2f2f2;letter-spacing:-0.342px;">obiekcie</span>
<span class="t" style="left:65.80px;top:306.69px;font-size:13.3px;color:#f2f2f2;letter-spacing:-1.194px;">7.</span>
<span class="t" style="left:87.30px;top:306.69px;font-size:13.3px;color:#f2f2f2;letter-spacing:-0.182px;">Przesyłanie plików obiektu do</span>
<span class="t" style="left:87.30px;top:323.19px;font-size:13.3px;color:#f2f2f2;letter-spacing:-0.163px;">serwera dLibra</span>
<span class="t" style="left:294.30px;top:91.59px;font-size:13.3px;font-weight:700;letter-spacing:0.040px;transform:scaleX(1.1200);transform-origin:0 0;">Metadane obiektu</span>
<span class="t" style="left:306.18px;top:121.59px;font-size:13.3px;letter-spacing:-0.314px;">Nazwa</span>
<span class="t" style="left:356.30px;top:121.59px;font-size:13.3px;letter-spacing:0.013px;">1586, sfsdg</span>
<span class="t" style="left:303.80px;top:143.79px;font-size:13.3px;letter-spacing:0.246px;">Atrybuty</span>
<span class="t" style="left:313.30px;top:178.39px;font-size:13.3px;letter-spacing:0.094px;">Widok atrybutów:</span>
<span class="t" style="left:428.30px;top:178.49px;font-size:13.3px;letter-spacing:-0.035px;">Podstawowy</span>
<span class="t" style="left:335.70px;top:217.29px;font-size:13.3px;letter-spacing:-1.484px;">CS</span>
<span class="t" style="left:335.70px;top:238.89px;font-size:13.3px;letter-spacing:-1.184px;">DE</span>
<span class="t" style="left:335.70px;top:260.49px;font-size:13.3px;letter-spacing:-1.184px;">EN</span>
<span class="t" style="left:335.70px;top:282.09px;font-size:13.3px;letter-spacing:-1.750px;">ES</span>
<span class="t" style="left:336.70px;top:303.69px;font-size:13.3px;letter-spacing:-2.266px;">PL</span>
<span class="t" style="left:313.30px;top:326.19px;font-size:13.3px;letter-spacing:-0.224px;">Niez.</span>
<span class="t" style="left:367.46px;top:224.89px;font-size:13.3px;letter-spacing:0.219px;">Nazwa atrybutu</span>
<span class="t" style="left:627.30px;top:224.89px;font-size:13.3px;letter-spacing:0.321px;">Kolej...</span>
<span class="t" style="left:688.30px;top:224.89px;font-size:13.3px;letter-spacing:0.159px;">Wartość atrybutu</span>
<span class="t" style="left:386.86px;top:249.69px;font-size:13.3px;font-weight:700;letter-spacing:0.529px;transform:scaleX(1.1200);transform-origin:0 0;">Tytuł*</span>
<span class="t" style="left:408.80px;top:269.02px;font-size:13.3px;letter-spacing:-0.007px;">Tytuł odmienny</span>
<span class="t" style="left:408.80px;top:288.35px;font-size:13.3px;letter-spacing:0.627px;">tytul</span>
<span class="t" style="left:386.86px;top:307.68px;font-size:13.3px;font-weight:700;transform:scaleX(1.0501);transform-origin:0 0;">Twórca</span>
<span class="t" style="left:386.86px;top:327.01px;font-size:13.3px;font-weight:700;transform:scaleX(1.0550);transform-origin:0 0;">Współtwórca</span>
<span class="t" style="left:386.86px;top:346.34px;font-size:13.3px;font-weight:700;letter-spacing:0.187px;transform:scaleX(1.1200);transform-origin:0 0;">Temat</span>
<span class="t" style="left:408.80px;top:365.67px;font-size:13.3px;letter-spacing:-0.147px;">Tagi użytkowników</span>
<span class="t" style="left:386.86px;top:385.00px;font-size:13.3px;font-weight:700;transform:scaleX(1.0760);transform-origin:0 0;">Zakres</span>
<span class="t" style="left:408.80px;top:404.33px;font-size:13.3px;letter-spacing:-0.114px;">Zakres przestrzenny</span>
<span class="t" style="left:408.80px;top:423.66px;font-size:13.3px;letter-spacing:-0.328px;">Zakres czasowy</span>
<span class="t" style="left:385.96px;top:442.99px;font-size:13.3px;font-weight:700;transform:scaleX(1.0006);transform-origin:0 0;">Opis</span>
<span class="t" style="left:408.80px;top:462.32px;font-size:13.3px;letter-spacing:-0.226px;">Miejsce wydania</span>
<span class="t" style="left:408.80px;top:481.65px;font-size:13.3px;letter-spacing:-0.246px;">Sponsor digitalizacji</span>
<span class="t" style="left:386.86px;top:500.98px;font-size:13.3px;font-weight:700;transform:scaleX(1.0580);transform-origin:0 0;">Wydawca</span>
<span class="t" style="left:385.96px;top:520.31px;font-size:13.3px;font-weight:700;letter-spacing:0.878px;transform:scaleX(1.1200);transform-origin:0 0;">Data**</span>
<span class="t" style="left:408.80px;top:539.64px;font-size:13.3px;letter-spacing:-0.070px;">Data utworzenia</span>
<span class="t" style="left:408.80px;top:558.97px;font-size:13.3px;letter-spacing:-0.062px;">Data wydania</span>
<span class="t" style="left:386.86px;top:578.30px;font-size:13.3px;font-weight:700;letter-spacing:0.214px;transform:scaleX(1.1200);transform-origin:0 0;">Typ*</span>
<span class="t" style="left:385.96px;top:597.63px;font-size:13.3px;font-weight:700;transform:scaleX(1.1043);transform-origin:0 0;">Format</span>
<span class="t" style="left:408.80px;top:616.96px;font-size:13.3px;letter-spacing:-0.823px;">Rozmiar</span>
<span class="t" style="left:408.80px;top:636.29px;font-size:13.3px;letter-spacing:-0.563px;">Nośnik</span>
<span class="t" style="left:385.96px;top:655.62px;font-size:13.3px;font-weight:700;letter-spacing:0.180px;transform:scaleX(1.1200);transform-origin:0 0;">Identyfikator</span>
<span class="t" style="left:408.80px;top:674.95px;font-size:13.3px;letter-spacing:-0.036px;">Sygnatura</span>
<span class="t" style="left:386.86px;top:694.28px;font-size:13.3px;font-weight:700;transform:scaleX(1.0606);transform-origin:0 0;">Źródło</span>
<span class="t" style="left:385.96px;top:713.61px;font-size:13.3px;font-weight:700;transform:scaleX(1.1196);transform-origin:0 0;">Język</span>
<span class="t" style="left:385.96px;top:732.94px;font-size:13.3px;font-weight:700;transform:scaleX(1.0756);transform-origin:0 0;">Powiązanie</span>
<span class="t" style="left:684.14px;top:249.69px;font-size:13.3px;letter-spacing:-0.059px;">sfsdg</span>
<span class="t" style="left:685.30px;top:520.31px;font-size:13.3px;letter-spacing:-0.585px;">1586</span>
<span class="t" style="left:717.10px;top:520.31px;font-size:13.3px;color:#707070;letter-spacing:0.158px;">[1586.01.01 - 1586.12.31]</span>
<span class="t" style="left:684.08px;top:578.30px;font-size:13.3px;letter-spacing:-0.547px;">książka</span>
<span class="t" style="left:306.02px;top:763.99px;font-size:13.3px;letter-spacing:-0.196px;">Plik główny</span>
<span class="t" style="left:380.50px;top:763.99px;font-size:13.3px;letter-spacing:-0.046px;">C:\Users</span>
<span class="t" style="left:431.90px;top:763.99px;font-size:13.3px;letter-spacing:-0.076px;">\Arleta Piwowarczyk</span>
<span class="t" style="left:550.10px;top:763.99px;font-size:13.3px;letter-spacing:-0.328px;">\Documents</span>
<span class="t" style="left:618.30px;top:763.99px;font-size:13.3px;letter-spacing:-0.360px;">\Szkolenie_dLibra_pliki</span>
<span class="t" style="left:747.00px;top:763.99px;font-size:13.3px;letter-spacing:-0.260px;">\Przyklady</span>
<span class="t" style="left:806.90px;top:763.99px;font-size:13.3px;letter-spacing:-0.194px;">\Przyklady</span>
<span class="t" style="left:867.90px;top:763.99px;font-size:13.3px;letter-spacing:0.089px;">\Wieloformatowa_pdf</span>
<span class="t" style="left:994.30px;top:763.99px;font-size:13.3px;letter-spacing:-0.866px;">\PDF</span>
<span class="t" style="left:1022.50px;top:763.99px;font-size:13.3px;letter-spacing:-0.159px;">\mainfile.pdf</span>
<span class="t" style="left:785.24px;top:810.19px;font-size:13.3px;letter-spacing:-0.443px;">Pomoc</span>
<span class="t" style="left:870.14px;top:810.19px;font-size:13.3px;letter-spacing:0.246px;">&lt;&lt; Wstecz</span>
<span class="t" style="left:978.52px;top:810.19px;font-size:13.3px;letter-spacing:0.593px;">Dalej &gt;&gt;</span>
<span class="t" style="left:1076.92px;top:810.19px;font-size:13.3px;color:#838383;letter-spacing:-0.508px;">Zakończ</span>
<span class="t" style="left:1168.64px;top:810.19px;font-size:13.3px;letter-spacing:-0.138px;">Anuluj</span>
<div style="left:767.30px;top:212.40px;width:249.50px;height:194.20px;background:#f2f2f2;border:1px solid #a6a6a6"></div>
<div style="left:770.50px;top:215.40px;width:242.30px;height:31.20px;background:#e4e4e4"></div>
<div style="left:807.60px;top:247.00px;width:1.00px;height:156.60px;background:#f6f6f6"></div>
<div style="left:1010.90px;top:257.00px;width:190.90px;height:21.60px;background:#ffffe1;border:1px solid #000"></div>
<span class="t" style="left:811.46px;top:223.21px;font-size:14.4px;color:#8a8a8a;">Kopiuj dziedziczone wartości</span>
<span class="t" style="left:811.46px;top:254.41px;font-size:14.4px;letter-spacing:-0.195px;">Kopiuj z CS</span>
<span class="t" style="left:811.46px;top:285.71px;font-size:14.4px;letter-spacing:-0.273px;">Kopiuj z DE</span>
<span class="t" style="left:811.46px;top:317.01px;font-size:14.4px;letter-spacing:-0.095px;">Kopiuj z EN</span>
<span class="t" style="left:811.46px;top:348.31px;font-size:14.4px;letter-spacing:-0.256px;">Kopiuj z PL</span>
<span class="t" style="left:811.46px;top:379.61px;font-size:14.4px;letter-spacing:-0.367px;">Kopiuj z ES</span>
<span class="t" style="left:1015.30px;top:259.31px;font-size:14.4px;letter-spacing:-0.029px;">Kopiuj dziedziczone wartości</span>
</body></html>
